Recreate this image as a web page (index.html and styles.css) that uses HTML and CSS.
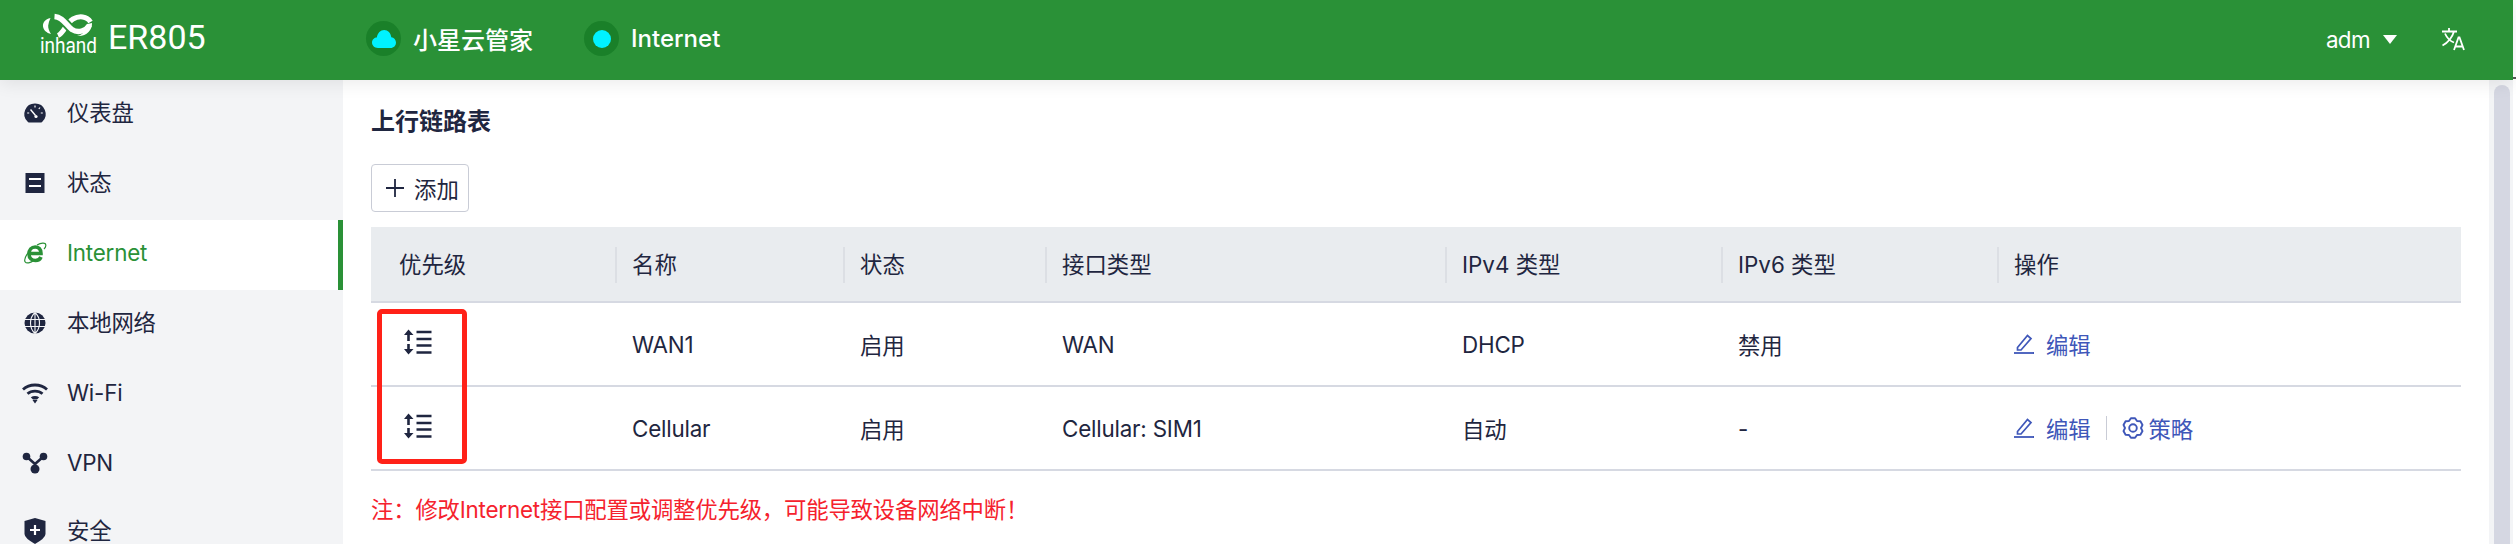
FILE: index.html
```html
<!DOCTYPE html>
<html lang="zh-CN">
<head>
    <meta charset="UTF-8">
    <meta name="viewport" content="width=device-width, initial-scale=1.0">
    <title>ER805 - Internet</title>
    <link rel="stylesheet" href="styles.css">
</head>
<body>
    <header class="topbar">
        <div class="brand">
            <svg class="brand-logo" viewBox="0 0 60 50" width="60" height="50">
                <path d="M10.500 6 C5 7 2.500 11 3 14.500 C3.500 18 6.500 21 11 22 C9 19 8 16 8.200 13.500 C8.500 11 9.300 8.500 10.500 6 Z" fill="#fff"/>
                <path d="M18 23.500 C24 21 26 11 33 7 C39 3.500 47 4 50.500 10" fill="none" stroke="#fff" stroke-width="5"/>
                <path d="M14.500 4.500 C23 5 26 13 32 17.500 C38 21.500 46 19 49.500 13" fill="none" stroke="#2a9137" stroke-width="9"/>
                <path d="M14.500 4.500 C23 5 26 13 32 17.500 C38 21.500 46 19 49.500 13" fill="none" stroke="#fff" stroke-width="5.400"/>
                <path d="M52 11 C52.500 18 46 25 37 24 C43 23 47 18 47.500 12 Z" fill="#fff"/>
                <text class="brand-maker" x="0" y="40.500" textLength="57" lengthAdjust="spacingAndGlyphs">inhand</text>
            </svg>
            <span class="brand-model">ER805</span>
        </div>
        <div class="crumb crumb-first">
            <span class="crumb-icon">
                <svg viewBox="0 0 24 18" width="24" height="18"><path d="M6 18 C2 18 0 15 0 12.500 C0 9.500 2.500 7.500 4.800 7.500 C5.500 3 8.500 0 12.200 0 C16 0 18.700 3 19.300 7.200 C22 7.600 24 9.800 24 12.500 C24 15.500 21.800 18 18.500 18 Z" fill="#00f2ff"/></svg>
            </span>
            <span>小星云管家</span>
        </div>
        <div class="crumb">
            <span class="crumb-icon"><span class="crumb-dot"></span></span>
            <span>Internet</span>
        </div>
        <div class="topbar-right">
            <span class="user">adm</span>
            <span class="user-caret"></span>
            <svg class="lang" viewBox="0 0 24 24" width="24" height="24" fill="none" stroke="#fff" stroke-width="1.800">
                <path d="M1 4.500 H16 M8 1 V4.500 M13 4.500 C11 11 7 15.500 1.500 18.500 M4 6.500 C6 11 9 14 13 15.500"/>
                <path d="M13 23 L17.500 10.500 H18.500 L23 23 M14.500 19.500 H21.500"/>
            </svg>
        </div>
    </header>

    <div class="layout">
        <nav class="sidebar">
            <a href="#" class="menu-item">
                <svg class="menu-icon" viewBox="0 0 26 22" width="26" height="22">
                    <path d="M13 1.500 A10.500 10.500 0 0 0 5.500 19.500 Q6 20.500 7 20.500 H19 Q20 20.500 20.500 19.500 A10.500 10.500 0 0 0 13 1.500 Z" fill="#1f2640"/>
                    <path d="M8.500 7.500 L13.500 13.500" stroke="#fff" stroke-width="1.400"/>
                    <circle cx="14" cy="14.500" r="1.600" fill="#fff"/>
                    <path d="M13 3.500 V5.500 M18 5.500 L16.800 7 M20.800 11 H18.800 M5.200 11 H7.200" stroke="#fff" stroke-width="1.200"/>
                </svg>
                <span>仪表盘</span>
            </a>
            <a href="#" class="menu-item">
                <svg class="menu-icon" viewBox="0 0 26 22" width="26" height="22">
                    <rect x="3.500" y="1" width="19" height="20" fill="#1f2640"/>
                    <path d="M7 7 H19 M7 14 H19" stroke="#fff" stroke-width="2"/>
                </svg>
                <span>状态</span>
            </a>
            <a href="#" class="menu-item menu-item-active">
                <svg class="menu-icon" viewBox="0 0 26 22" width="26" height="22" fill="none" stroke="#2a9137">
                    <path d="M8.500 11.500 H19 C19 7 16.500 5 13.200 5 C9.500 5 7 8 7 12 C7 16.500 10 18.500 13.500 18.500 C16 18.500 18 17.500 19 15" stroke-width="3.600"/>
                    <path d="M15 3 C19 0.800 23.500 0.300 23.800 3 C24 4.500 23 6 22 7 M7 9.500 C3.500 14 1.800 18 3.200 20 C4.500 21.800 8.500 20.800 11 19" stroke-width="1.200"/>
                </svg>
                <span>Internet</span>
            </a>
            <a href="#" class="menu-item">
                <svg class="menu-icon" viewBox="0 0 26 22" width="26" height="22">
                    <circle cx="13" cy="11" r="10.500" fill="#1f2640"/>
                    <path d="M2.500 7.500 H23.500 M2.500 14.500 H23.500 M13 0.500 V21.500 M13 0.500 C7 6 7 16 13 21.500 M13 0.500 C19 6 19 16 13 21.500" fill="none" stroke="#f3f4f6" stroke-width="1.100"/>
                </svg>
                <span>本地网络</span>
            </a>
            <a href="#" class="menu-item">
                <svg class="menu-icon" viewBox="0 0 26 22" width="26" height="22" fill="none" stroke="#1f2640" stroke-width="2.800">
                    <path d="M1 7.500 C7.500 1.500 18.500 1.500 25 7.500 M5.500 11.800 C9.500 8.300 16.500 8.300 20.500 11.800"/>
                    <path d="M8.800 15.200 C11.500 13.500 14.500 13.500 17.200 15.200 L15 17.500 H11 Z" fill="#1f2640" stroke="none"/>
                    <path d="M13 21.500 L10.500 18 H15.500 Z" fill="#1f2640" stroke="none"/>
                </svg>
                <span>Wi-Fi</span>
            </a>
            <a href="#" class="menu-item">
                <svg class="menu-icon" viewBox="0 0 26 22" width="26" height="22">
                    <circle cx="4.500" cy="4.500" r="3.800" fill="#1f2640"/>
                    <circle cx="21.500" cy="4.500" r="3.800" fill="#1f2640"/>
                    <circle cx="13" cy="17" r="4.500" fill="#1f2640"/>
                    <path d="M4.500 4.500 L13 12 L21.500 4.500 M13 12 V17" fill="none" stroke="#1f2640" stroke-width="2.600"/>
                </svg>
                <span>VPN</span>
            </a>
            <a href="#" class="menu-item">
                <svg class="menu-icon" viewBox="0 0 26 26" width="26" height="26">
                    <path d="M13 0 L23.500 3 V16 Q23.500 20 13 26 Q2.500 20 2.500 16 V3 Z" fill="#1f2640"/>
                    <path d="M13 7 V17 M8 12 H18" stroke="#fff" stroke-width="2.200"/>
                </svg>
                <span>安全</span>
            </a>
        </nav>

        <main class="content">
            <h2 class="section-title">上行链路表</h2>
            <button class="add-btn">
                <svg viewBox="0 0 18 18" width="18" height="18" stroke="#1f2640" stroke-width="1.800"><path d="M9 0 V18 M0 9 H18"/></svg>
                添加
            </button>

            <table class="link-table">
                <colgroup>
                    <col class="col-priority"><col class="col-name"><col class="col-state"><col class="col-iface">
                    <col class="col-ipv4"><col class="col-ipv6"><col class="col-action">
                </colgroup>
                <thead>
                    <tr>
                        <th>优先级</th>
                        <th>名称</th>
                        <th>状态</th>
                        <th>接口类型</th>
                        <th>IPv4 类型</th>
                        <th>IPv6 类型</th>
                        <th>操作</th>
                    </tr>
                </thead>
                <tbody>
                    <tr>
                        <td>
                            <svg class="sort-icon" viewBox="0 0 28 26" width="28" height="26">
                                <use href="#sort-glyph"/>
                            </svg>
                        </td>
                        <td>WAN1</td>
                        <td>启用</td>
                        <td>WAN</td>
                        <td>DHCP</td>
                        <td>禁用</td>
                        <td>
                            <a href="#" class="action">
                                <svg viewBox="0 0 20 20" width="20" height="20"><use href="#edit-glyph"/></svg>
                                编辑
                            </a>
                        </td>
                    </tr>
                    <tr>
                        <td>
                            <svg class="sort-icon" viewBox="0 0 28 26" width="28" height="26">
                                <use href="#sort-glyph"/>
                            </svg>
                        </td>
                        <td>Cellular</td>
                        <td>启用</td>
                        <td>Cellular: SIM1</td>
                        <td>自动</td>
                        <td>-</td>
                        <td>
                            <a href="#" class="action">
                                <svg viewBox="0 0 20 20" width="20" height="20"><use href="#edit-glyph"/></svg>
                                编辑
                            </a>
                            <span class="action-sep"></span>
                            <a href="#" class="action action-tight">
                                <svg viewBox="0 0 22 24" width="22" height="24" fill="none" stroke="#3f57b9" stroke-width="1.900">
                                    <path d="M8.920 2.220 H13.080 L15 5.070 L18.430 5.310 L20.510 8.910 L19 12 L20.510 15.090 L18.430 18.690 L15 18.930 L13.080 21.780 H8.920 L7 18.930 L3.570 18.690 L1.490 15.090 L3 12 L1.490 8.910 L3.570 5.310 L7 5.070 Z" stroke-linejoin="round"/>
                                    <circle cx="11" cy="12" r="3.800"/>
                                </svg>
                                策略
                            </a>
                        </td>
                    </tr>
                </tbody>
            </table>

            <p class="note">注&#xFF1A;修改Internet接口配置或调整优先级&#xFF0C;可能导致设备网络中断&#xFF01;</p>

            <!-- red box from the original screenshot annotation -->
            <div class="callout"></div>
        </main>

        <div class="scrollbar"><div class="scrollbar-thumb"></div></div>
    </div>

    <svg class="glyphs" width="0" height="0">
        <defs>
            <g id="sort-glyph">
                <path d="M4.500 12 V3 M4.500 15 V24" stroke="#1f2640" stroke-width="2.600"/>
                <path d="M4.500 0.500 L0 6 H9.500 Z M4.500 25.500 L0 20 H9.500 Z" fill="#1f2640"/>
                <path d="M12.500 3 H27.500 M12.500 10 H27.500 M12.500 16.500 H27.500 M12.500 23.500 H27.500" stroke="#1f2640" stroke-width="2.500"/>
            </g>
            <g id="edit-glyph">
                <path d="M3.500 13.500 L13.500 1.500 L17 4.500 L7 16 H3.500 Z" fill="none" stroke="#3f57b9" stroke-width="1.700"/>
                <path d="M0 19 H20" stroke="#3f57b9" stroke-width="1.800"/>
            </g>
        </defs>
    </svg>
</body>
</html>
```

FILE: styles.css
```css
* {
    margin: 0;
    padding: 0;
    box-sizing: border-box;
    font-family: Inter, "Noto Sans CJK SC", sans-serif;
}

html, body {
    height: 100%;
    overflow: hidden;
}

body {
    background-color: #fff;
    color: #1f2640;
    font-size: 22.4px;
    display: flex;
    flex-direction: column;
}

a {
    color: inherit;
    text-decoration: none;
}

.glyphs {
    position: absolute;
}

/* top bar */
.topbar {
    height: 80px;
    flex-shrink: 0;
    margin-right: 3px;
    padding-left: 40px;
    display: flex;
    align-items: center;
    background-color: #2a9137;
    color: white;
    position: relative;
    z-index: 2;
    box-shadow: 0 4px 16px rgba(0, 0, 0, 0.08);
}

/* thin line of the window behind, on the right edge */
.topbar::after {
    content: '';
    position: absolute;
    right: -3px;
    top: 77px;
    width: 3px;
    height: 2px;
    background-color: #555;
}

.brand {
    width: 326px;
    height: 80px;
    display: flex;
    align-items: flex-start;
    gap: 8px;
}

.brand-logo {
    margin-top: 12px;
    flex-shrink: 0;
    overflow: visible;
}

.brand-maker {
    font-family: Roboto, sans-serif;
    font-size: 22px;
    font-weight: 400;
    fill: white;
}

.brand-model {
    font-family: Roboto, sans-serif;
    font-size: 34px;
    line-height: 75px;
}

.crumb {
    display: flex;
    align-items: center;
    gap: 12px;
    font-size: 24px;
    font-weight: 500;
    margin-right: 51px;
    padding-bottom: 3px;
}

.crumb-icon {
    width: 35px;
    height: 35px;
    border-radius: 50%;
    background-color: #1a8029;
    display: flex;
    align-items: center;
    justify-content: center;
}

.crumb-dot {
    width: 18px;
    height: 18px;
    border-radius: 50%;
    background-color: #00f2ff;
}

.topbar-right {
    margin-left: auto;
    padding-right: 48px;
    padding-bottom: 2px;
    display: flex;
    align-items: center;
}

.user {
    letter-spacing: -0.6px;
}

.user-caret {
    width: 0;
    height: 0;
    margin-left: 13px;
    margin-right: 44px;
    border-left: 7px solid transparent;
    border-right: 7px solid transparent;
    border-top: 9px solid white;
}

/* body of the page */
.layout {
    flex: 1;
    display: flex;
    min-height: 0;
}

.sidebar {
    width: 343px;
    flex-shrink: 0;
    background-color: #f3f4f6;
    overflow: hidden;
}

.menu-item {
    height: 70px;
    padding-left: 22px;
    padding-bottom: 4px;
    display: flex;
    align-items: center;
    gap: 19px;
    color: #1f2640;
    line-height: 1;
    letter-spacing: -0.2px;
}

.menu-item:last-child {
    padding-bottom: 8px;
}

.menu-icon {
    flex-shrink: 0;
}

.menu-item-active {
    background-color: white;
    color: #2a9137;
    border-right: 5px solid #2a9137;
}

.content {
    flex: 1;
    min-width: 0;
    padding: 28px 28px 0;
    position: relative;
}

.section-title {
    font-size: 24px;
    font-weight: 600;
    line-height: 28px;
}

.add-btn {
    margin-top: 28px;
    width: 98px;
    height: 48px;
    padding-left: 14px;
    display: flex;
    align-items: center;
    gap: 10px;
    background-color: white;
    border: 1px solid #c9ccd6;
    border-radius: 4px;
    color: #1f2640;
    font-size: 22.4px;
}

.link-table {
    margin-top: 15px;
    width: 2090px;
    table-layout: fixed;
    border-collapse: collapse;
}

.col-priority { width: 233px; }
.col-name { width: 228px; }
.col-state { width: 202px; }
.col-iface { width: 400px; }
.col-ipv4 { width: 276px; }
.col-ipv6 { width: 276px; }
.col-action { width: 475px; }

.link-table th {
    height: 75px;
    padding-left: 28px;
    padding-bottom: 2px;
    background-color: #e9ecef;
    border-bottom: 2px solid #d6d9e2;
    font-weight: 400;
    text-align: left;
    position: relative;
}

.link-table th + th::before {
    content: '';
    position: absolute;
    left: 11px;
    top: 20px;
    height: 36px;
    width: 2px;
    background-color: #dcdfe4;
}

.link-table td {
    height: 84px;
    padding-left: 28px;
    border-bottom: 2px solid #d6d9e2;
    letter-spacing: -0.2px;
}

.sort-icon {
    display: block;
    margin-left: 5px;
    margin-top: -4px;
}

.action {
    display: inline-flex;
    align-items: center;
    gap: 12px;
    color: #3f57b9;
    vertical-align: middle;
}

.action-tight {
    gap: 5px;
}

.action-sep {
    display: inline-block;
    width: 1px;
    height: 24px;
    margin: 0 9px;
    background-color: #c9ccd6;
    vertical-align: middle;
}

.note {
    margin-top: 21px;
    color: #f5222d;
    letter-spacing: -0.2px;
}

.callout {
    position: absolute;
    left: 34px;
    top: 229px;
    width: 90px;
    height: 155px;
    border: 5px solid #ff2118;
    border-radius: 5px;
}

/* scrollbar */
.scrollbar {
    width: 24px;
    flex-shrink: 0;
    margin-right: 3px;
    padding: 5px 3px 0 5px;
    background-color: #f3f4f6;
}

.scrollbar-thumb {
    height: 100%;
    border-radius: 8px 8px 0 0;
    background-color: #d5d7e2;
}
```
